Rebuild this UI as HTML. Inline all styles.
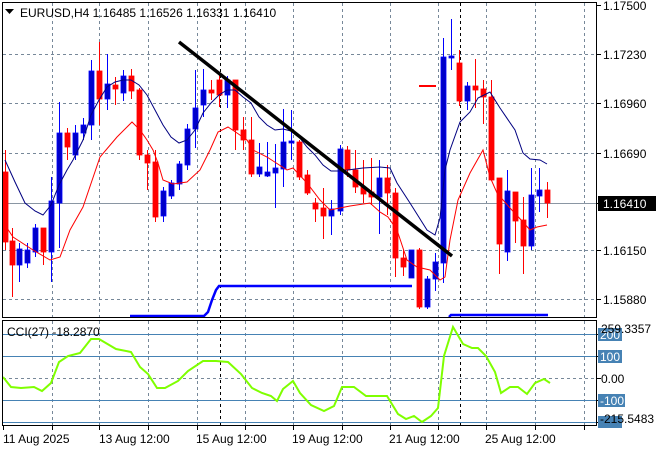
<!DOCTYPE html>
<html><head><meta charset="utf-8"><style>
html,body{margin:0;padding:0;background:#fff;width:660px;height:450px;overflow:hidden}
svg{display:block;font-family:"Liberation Sans",sans-serif}
</style></head><body>
<svg id="s" width="660" height="450" xmlns="http://www.w3.org/2000/svg">
<rect width="660" height="450" fill="#fff"/>
<g id="grid" stroke="#778899" stroke-width="1" stroke-dasharray="3,3" fill="none"></g>
<line x1="2" y1="203.5" x2="597" y2="203.5" stroke="#8a96a3"/>
<line x1="220.5" y1="3" x2="220.5" y2="317" stroke="#000" stroke-dasharray="3,3"/>
<line x1="460.5" y1="3" x2="460.5" y2="317" stroke="#000" stroke-dasharray="3,3"/>
<line x1="220.5" y1="320" x2="220.5" y2="425" stroke="#000" stroke-dasharray="3,3"/>
<line x1="460.5" y1="320" x2="460.5" y2="425" stroke="#000" stroke-dasharray="3,3"/>
<g id="cand"></g>
<polyline fill="none" stroke="#000080" stroke-width="1" points="5,160 15,182 25,203 35,211 43,215 51,205 59,185 67,170 73,160 83,140 91,115 99,100 107,87 115,82 123,80 131,80 139,85 147,95 155,110 163,125 171,137 179,143 187,140 195,130 203,113 211,103 219,95 227,90 235,90 243,97 251,103 259,117 267,125 275,130 283,129 291,131 299,137 307,147 315,155 323,165 331,171 340,171 363,168 380,167 390,168 397,183 410,203 427,230 435,235 440,218 445,170 450,150 460,122 470,112 478,98 490,92 500,108 515,130 523,153 530,159 540,160 547,164"/>
<polyline fill="none" stroke="#ff0000" stroke-width="1" points="5,225 13,237 33,250 50,260 60,257 70,230 83,207 100,157 117,137 132,122 140,130 147,140 153,150 158,163 163,180 173,184 187,182 200,170 210,150 218,132 228,127 237,133 247,140 253,150 267,157 287,170 293,168 307,183 320,200 330,210 350,206 370,203 380,212 388,217 397,230 407,260 417,267 430,270 440,280 445,277 450,240 458,200 470,173 483,150 490,177 497,193 510,208 523,222 530,230 537,227 547,225"/>
<polyline fill="none" stroke="#0000ff" stroke-width="2.5" points="130,316 204,316 208,312 212,300 216,290 219,286 412,286"/>
<polyline fill="none" stroke="#0000ff" stroke-width="2.5" points="449,317 451,315 548,315"/>
<line x1="419" y1="86" x2="436" y2="86" stroke="#ff0000" stroke-width="2"/>
<line x1="179" y1="42" x2="452" y2="256" stroke="#000" stroke-width="3.5"/>
<rect x="2.5" y="2.5" width="594" height="315" fill="none" stroke="#000"/>
<!-- CCI -->
<line x1="3" y1="334.5" x2="596" y2="334.5" stroke="#4682b4"/>
<line x1="3" y1="356.5" x2="596" y2="356.5" stroke="#4682b4"/>
<line x1="3" y1="378.5" x2="596" y2="378.5" stroke="#778899" stroke-dasharray="3,3"/>
<line x1="3" y1="400.5" x2="596" y2="400.5" stroke="#4682b4"/>
<line x1="3" y1="422.5" x2="596" y2="422.5" stroke="#4682b4"/>
<polyline fill="none" stroke="#7fff00" stroke-width="2" points="3,377 11,387 21,388 34,387 42,391 51,383 59,362 68,356 80,353 91,339 99,339 116,349 131,352 140,367 148,374 157,388 165,388 178,381 188,371 203,361 216,361 228,362 241,374 252,388 262,393 271,396 277,401 283,389 293,381 300,393 311,405 324,411 334,406 342,387 354,387 366,396 387,396 398,414 406,419 414,416 422,422 431,416 438,408 444,356 453,327 463,344 472,348 478,348 486,356 495,372 501,393 510,387 518,387 527,394 535,383 544,379 550,383"/>
<rect x="2.5" y="320.5" width="594" height="105" fill="none" stroke="#000"/>
<g font-size="12" fill="#000">
<path d="M5,9 h9 l-4.5,5 z" fill="#000"/>
<text x="20" y="17">EURUSD,H4  1.16485 1.16526 1.16331 1.16410</text>
<text x="7" y="336">CCI(27) -18.2870</text>
</g>
<g id="ticks" stroke="#000"></g>
<g font-size="12" fill="#000">
<text x="603" y="10">1.17500</text>
<text x="603" y="59">1.17230</text>
<text x="603" y="108">1.16960</text>
<text x="603" y="158">1.16690</text>
<text x="603" y="255">1.16150</text>
<text x="603" y="304">1.15880</text>
</g>
<rect x="598" y="196" width="58" height="15" fill="#000"/>
<text x="603" y="208" font-size="12" fill="#fff">1.16410</text>
<g font-size="12">
<rect x="598" y="328" width="24" height="13" fill="#4682b4"/>
<rect x="598" y="350" width="24" height="13" fill="#4682b4"/>
<rect x="598" y="394" width="27" height="13" fill="#4682b4"/>
<rect x="598" y="416" width="24" height="12" fill="#4682b4"/>
<text x="600" y="339" fill="#fff">200</text>
<text x="600" y="361" fill="#fff">100</text>
<text x="600" y="405" fill="#fff">-100</text>
<text x="601" y="333" fill="#000">259.3357</text>
<text x="601" y="383" fill="#000">0.00</text>
<text x="600" y="423" fill="#000">-215.5483</text>
</g>
<g font-size="12" fill="#000">
<text x="3" y="443">11 Aug 2025</text>
<text x="99" y="443">13 Aug 12:00</text>
<text x="196" y="443">15 Aug 12:00</text>
<text x="292" y="443">19 Aug 12:00</text>
<text x="389" y="443">21 Aug 12:00</text>
<text x="485" y="443">25 Aug 12:00</text>
</g>
</svg>
<script>
var NS="http://www.w3.org/2000/svg";
function el(p,t,a){var e=document.createElementNS(NS,t);for(var k in a)e.setAttribute(k,a[k]);p.appendChild(e);return e;}
var g=document.getElementById("grid");
[52,99,148,197,245,293,342,390,438,486,535,584].forEach(function(x){
 el(g,"line",{x1:x+.5,y1:3,x2:x+.5,y2:317});
 el(g,"line",{x1:x+.5,y1:321,x2:x+.5,y2:425});
});
[54,103,153,250,299].forEach(function(y){el(g,"line",{x1:3,y1:y+.5,x2:596,y2:y+.5});});
var tk=document.getElementById("ticks");
[3,52,99,148,197,245,293,342,390,438,486,535,584].forEach(function(x){el(tk,"line",{x1:x+.5,y1:426,x2:x+.5,y2:430});});
[5,54,103,153,203,250,299,334,356,378,400,422].forEach(function(y){el(tk,"line",{x1:597,y1:y+.5,x2:601,y2:y+.5});});
// x, color(r/b), bodyTop, bodyBot, high, low
var C=[
[5,'r',172,242,150,250],[12,'r',241,265,228,297],[19,'b',249,265,243,282],[27,'b',250,263,243,268],[35,'b',228,252,224,257],[43,'r',228,252,228,265],
[51,'b',201,252,177,282],[59,'b',133,203,102,248],[67,'r',133,147,128,160],[75,'b',133,155,125,160],[83,'b',125,133,118,140],[91,'b',71,125,60,140],
[99,'r',71,99,42,125],[107,'b',84,99,54,110],[115,'r',85,89,77,105],[123,'b',76,93,70,101],[131,'r',76,91,69,99],[139,'r',90,155,88,160],
[147,'r',155,163,150,190],[155,'r',162,217,150,222],[163,'b',191,216,187,222],[171,'b',183,196,180,199],[179,'b',164,184,161,190],[187,'b',129,165,124,170],
[195,'b',108,129,70,148],[203,'b',90,105,69,117],[211,'r',90,93,80,100],[219,'r',80,95,72,107],[227,'b',80,95,76,108],[235,'r',80,130,80,150],
[243,'r',130,140,117,150],[251,'r',140,174,117,177],[259,'b',167,174,143,177],[267,'b',172,176,142,177],[275,'b',168,173,144,208],[283,'b',142,169,109,187],
[291,'b',141,143,110,160],[299,'r',142,177,140,180],[307,'r',175,193,170,195],[315,'r',203,209,198,222],[323,'r',208,216,188,239],[331,'b',209,216,200,235],
[340,'b',149,211,145,215],[347,'r',150,170,146,177],[355,'r',170,187,150,193],[363,'r',187,194,160,203],[371,'r',192,197,158,205],[379,'b',178,197,160,234],
[387,'r',178,193,165,215],[395,'r',193,258,188,277],[403,'r',258,267,250,276],[411,'b',250,278,250,278],[419,'r',250,307,248,309],[427,'b',279,307,276,309],
[435,'b',262,279,253,291],[443,'b',57,263,38,283],[451,'b',56,58,19,70],[459,'r',63,101,50,106],[467,'b',86,101,82,110],[475,'r',86,90,59,108],
[483,'r',89,97,80,124],[491,'r',97,180,80,180],[499,'r',178,244,178,274],[507,'b',191,252,170,261],[515,'r',192,221,193,243],[523,'r',220,246,197,274],
[531,'b',195,246,168,250],[539,'b',190,196,168,212],[547,'r',190,203,182,218]];
var cg=document.getElementById("cand");
C.forEach(function(c){
 var col=c[1]=='r'?'#ff0000':'#0000ff';
 el(cg,"line",{x1:c[0]+.5,y1:c[4],x2:c[0]+.5,y2:c[5],stroke:col});
 var h=Math.max(c[3]-c[2],1.5);
 el(cg,"rect",{x:c[0]-2,y:c[2],width:5,height:h,fill:c[1]=='r'?'#ff0000':'#0000c8',stroke:c[1]=='r'?'#ff0000':'#0000ff','stroke-width':0.8});
});
</script>
</body></html>
